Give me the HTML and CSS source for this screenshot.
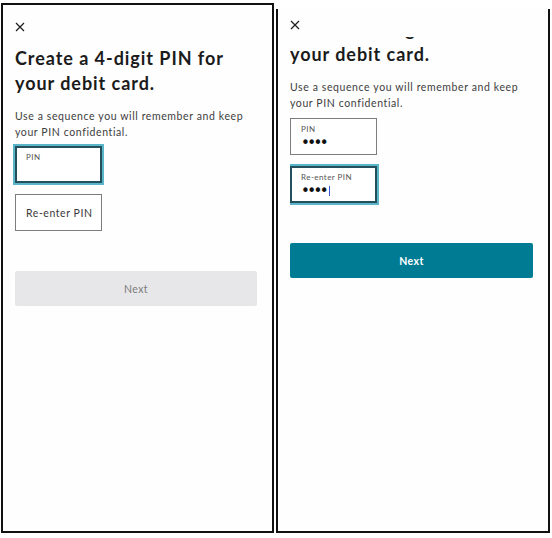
FILE: index.html
```html
<!DOCTYPE html>
<html lang="en">
<head>
<meta charset="utf-8">
<title>Create PIN</title>
<link rel="stylesheet" href="styles.css">
</head>
<body>
<div class="screens">
  <section class="panel panel-left">
    <div class="header header-left">
      <svg class="close" viewBox="0 0 10 10" aria-label="Close"><path d="M1 1 L9 9 M9 1 L1 9"/></svg>
    </div>
    <div class="content">
      <h1 class="title">Create a 4-digit PIN for<br>your debit card.</h1>
      <p class="desc">Use a sequence you will remember and keep<br>your PIN confidential.</p>
      <div class="fields">
        <div class="field focused"><span class="label">PIN</span></div>
        <div class="field empty"><span class="placeholder">Re-enter PIN</span></div>
      </div>
      <button class="btn btn-disabled" type="button">Next</button>
    </div>
  </section>

  <section class="panel panel-right">
    <div class="header header-right">
      <svg class="close" viewBox="0 0 10 10" aria-label="Close"><path d="M1 1 L9 9 M9 1 L1 9"/></svg>
    </div>
    <div class="viewport">
      <div class="content scrolled">
        <h1 class="title">Create a 4-digit PIN for<br>your debit card.</h1>
        <p class="desc">Use a sequence you will remember and keep<br>your PIN confidential.</p>
        <div class="fields">
          <div class="field filled"><span class="label">PIN</span><span class="value">••••</span></div>
          <div class="field focused filled"><span class="label">Re-enter PIN</span><span class="value">••••<span class="caret"></span></span></div>
        </div>
        <button class="btn btn-active" type="button">Next</button>
      </div>
    </div>
  </section>
</div>
</body>
</html>
```

FILE: styles.css
```css
body {
  margin: 0;
  background: #ffffff;
  font-family: Lato, "Open Sans", sans-serif;
}

.screens {
  display: flex;
  align-items: flex-start;
  padding-left: 1px;
}

.panel {
  box-sizing: border-box;
  border: 2px solid #111111;
  background: #fefefe;
  padding: 0 15px 0 12px;
}

.panel-left {
  width: 273px;
  height: 530px;
  margin-top: 3px;
}

.panel-right {
  display: flex;
  flex-direction: column;
  width: 274px;
  height: 524px;
  margin-top: 9px;
  margin-left: 2px;
  border-top: none;
}

.header {
  box-sizing: border-box;
  flex: none;
}

.header-left {
  height: 41px;
  padding-top: 17px;
}

.header-right {
  position: relative;
  z-index: 1;
  height: 28px;
  padding-top: 11px;
  background: #fefefe;
}

.close {
  display: block;
  width: 10px;
  height: 10px;
  fill: none;
  stroke: #1e1e1e;
  stroke-width: 1.2;
}

.viewport {
  flex: 1;
  min-height: 0;
  overflow: hidden;
  clip-path: inset(0);
  display: flex;
  flex-direction: column;
}

.scrolled {
  flex: none;
  margin-top: -20px;
}

.title {
  margin: 0;
  font-size: 18px;
  font-weight: 700;
  line-height: 25px;
  letter-spacing: 0.95px;
  color: #1b1b1b;
}

.desc {
  margin: 12px 0 0;
  font-size: 10.5px;
  line-height: 16px;
  letter-spacing: 0.6px;
  color: #3d3d3d;
}

.fields {
  margin-top: 6px;
  display: flex;
  flex-direction: column;
  gap: 11px;
}

.scrolled .fields {
  margin-top: 7px;
}

.field {
  box-sizing: border-box;
  width: 87px;
  height: 37px;
  border: 1px solid #7d7d7d;
  background: #ffffff;
  padding: 6px 0 0 10px;
  display: flex;
  flex-direction: column;
}

.field.focused {
  border: 2px solid #24505e;
  box-shadow: 0 0 0 2px #5ab5c9;
  padding: 5px 0 0 9px;
}

.field.empty {
  padding: 0 0 0 10px;
  justify-content: center;
}

.label {
  font-size: 8px;
  line-height: 9px;
  letter-spacing: 0.45px;
  color: #555555;
}

.placeholder {
  font-size: 10.5px;
  letter-spacing: 0.55px;
  color: #3a3a3a;
}

.value {
  margin-top: 3px;
  font-family: "DejaVu Sans", sans-serif;
  font-size: 15px;
  line-height: 12px;
  letter-spacing: -2.6px;
  color: #111111;
  display: flex;
  align-items: center;
}

.caret {
  display: inline-block;
  width: 1px;
  height: 10px;
  margin-left: 3px;
  background: #3556d6;
}

.btn {
  display: block;
  width: 100%;
  height: 35px;
  margin-top: 40px;
  border: none;
  border-radius: 2px;
  font-family: Lato, "Open Sans", sans-serif;
  font-size: 10.5px;
  letter-spacing: 0.4px;
}

.btn-disabled {
  background: #e7e6e9;
  color: #7d7d7d;
}

.btn-active {
  background: #007b94;
  color: #ffffff;
  font-weight: 700;
}
```
